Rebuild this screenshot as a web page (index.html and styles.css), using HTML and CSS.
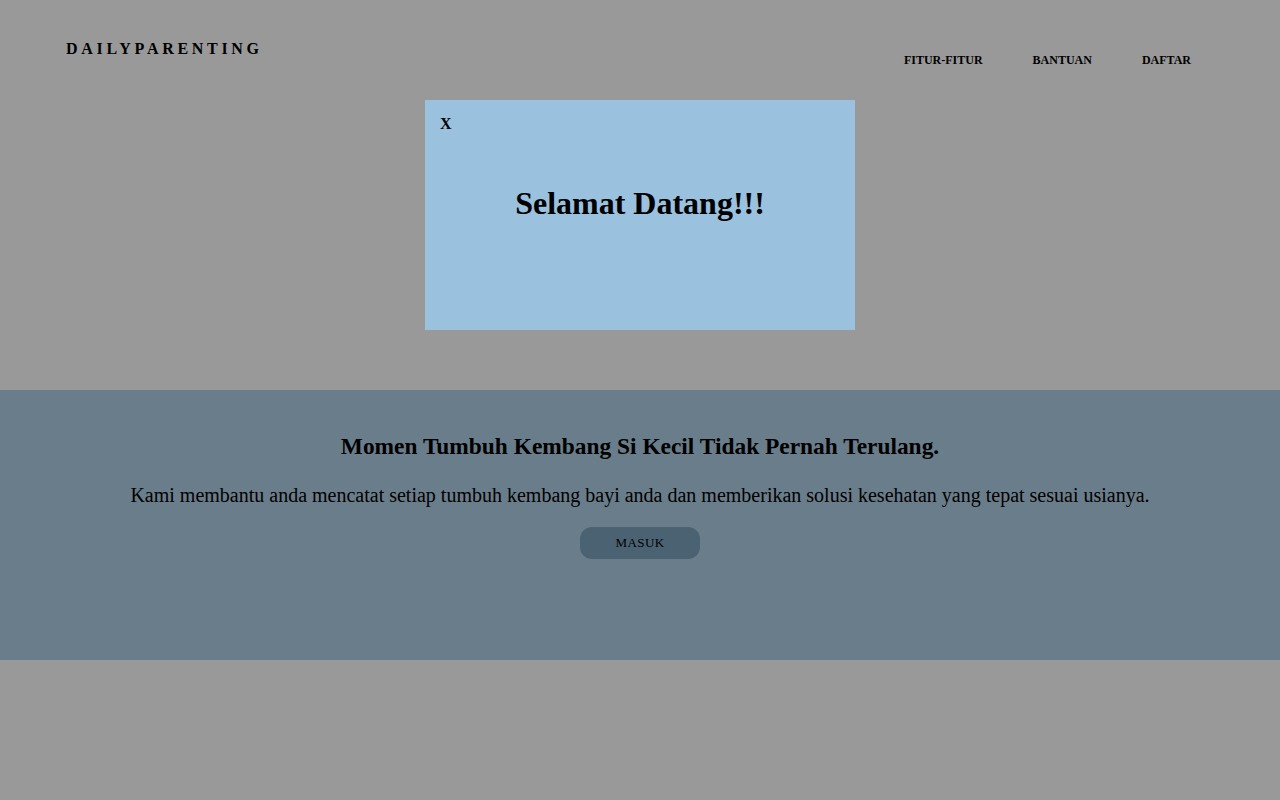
FILE: index.html
```html
<!DOCTYPE html>
<html lang="en">
<head>
    <meta charset="UTF-8">
    <title>DailyParenting</title>
    <link rel="stylesheet" href="styles.css">
</head>
<body>
    <header>
        <div class="logo">DAILYPARENTING</div>
        <nav class="navbar">
            <a href="#">FITUR-FITUR</a>
            <a href="#">BANTUAN</a>
            <a href="#">DAFTAR</a>
        </nav>
    </header>

    <section class="hero">
        <h2>Momen Tumbuh Kembang Si Kecil Tidak Pernah Terulang.</h2>
        <p>Kami membantu anda mencatat setiap tumbuh kembang bayi anda dan memberikan solusi kesehatan yang tepat sesuai usianya.</p>
        <a href="#" class="masuk-button">MASUK</a>
    </section>

    <div class="overlay">
        <div class="modal">
            <span class="close">X</span>
            <h1>Selamat Datang!!!</h1>
        </div>
    </div>
</body>
</html>
```

FILE: styles.css
```css
* {
    margin: 0;
    padding: 0;
    box-sizing: border-box;
}

body {
    font-family: "Liberation Serif", "Times New Roman", serif;
    background: #ffffff;
    color: #000;
    min-height: 800px;
}

header {
    display: flex;
    justify-content: space-between;
    align-items: flex-start;
    height: 390px;
    padding: 40px 89px 0 66px;
}

.logo {
    font-size: 16px;
    font-weight: bold;
    letter-spacing: 3.7px;
}

.navbar {
    display: flex;
    gap: 50px;
    margin-top: 13px;
}

.navbar a {
    color: #000;
    text-decoration: none;
    font-size: 12px;
    font-weight: bold;
}

.hero {
    background: #b1d0e6;
    height: 270px;
    text-align: center;
    padding-top: 43px;
}

.hero h2 {
    font-size: 23.4px;
    margin-bottom: 24px;
}

.hero p {
    font-size: 20px;
    margin-bottom: 20px;
}

.masuk-button {
    display: inline-block;
    width: 120px;
    height: 32px;
    line-height: 32px;
    background: #7da3c0;
    border-radius: 12px;
    color: #000;
    text-decoration: none;
    font-size: 13px;
    letter-spacing: 0.4px;
}

.overlay {
    position: fixed;
    inset: 0;
    background: rgba(0, 0, 0, 0.4);
}

.modal {
    width: 430px;
    height: 230px;
    margin: 100px auto 0;
    background: #9ac1de;
    padding: 15px;
    text-align: center;
}

.close {
    display: block;
    text-align: left;
    font-size: 16px;
    font-weight: bold;
}

.modal h1 {
    font-size: 32px;
    margin-top: 52px;
}
```
